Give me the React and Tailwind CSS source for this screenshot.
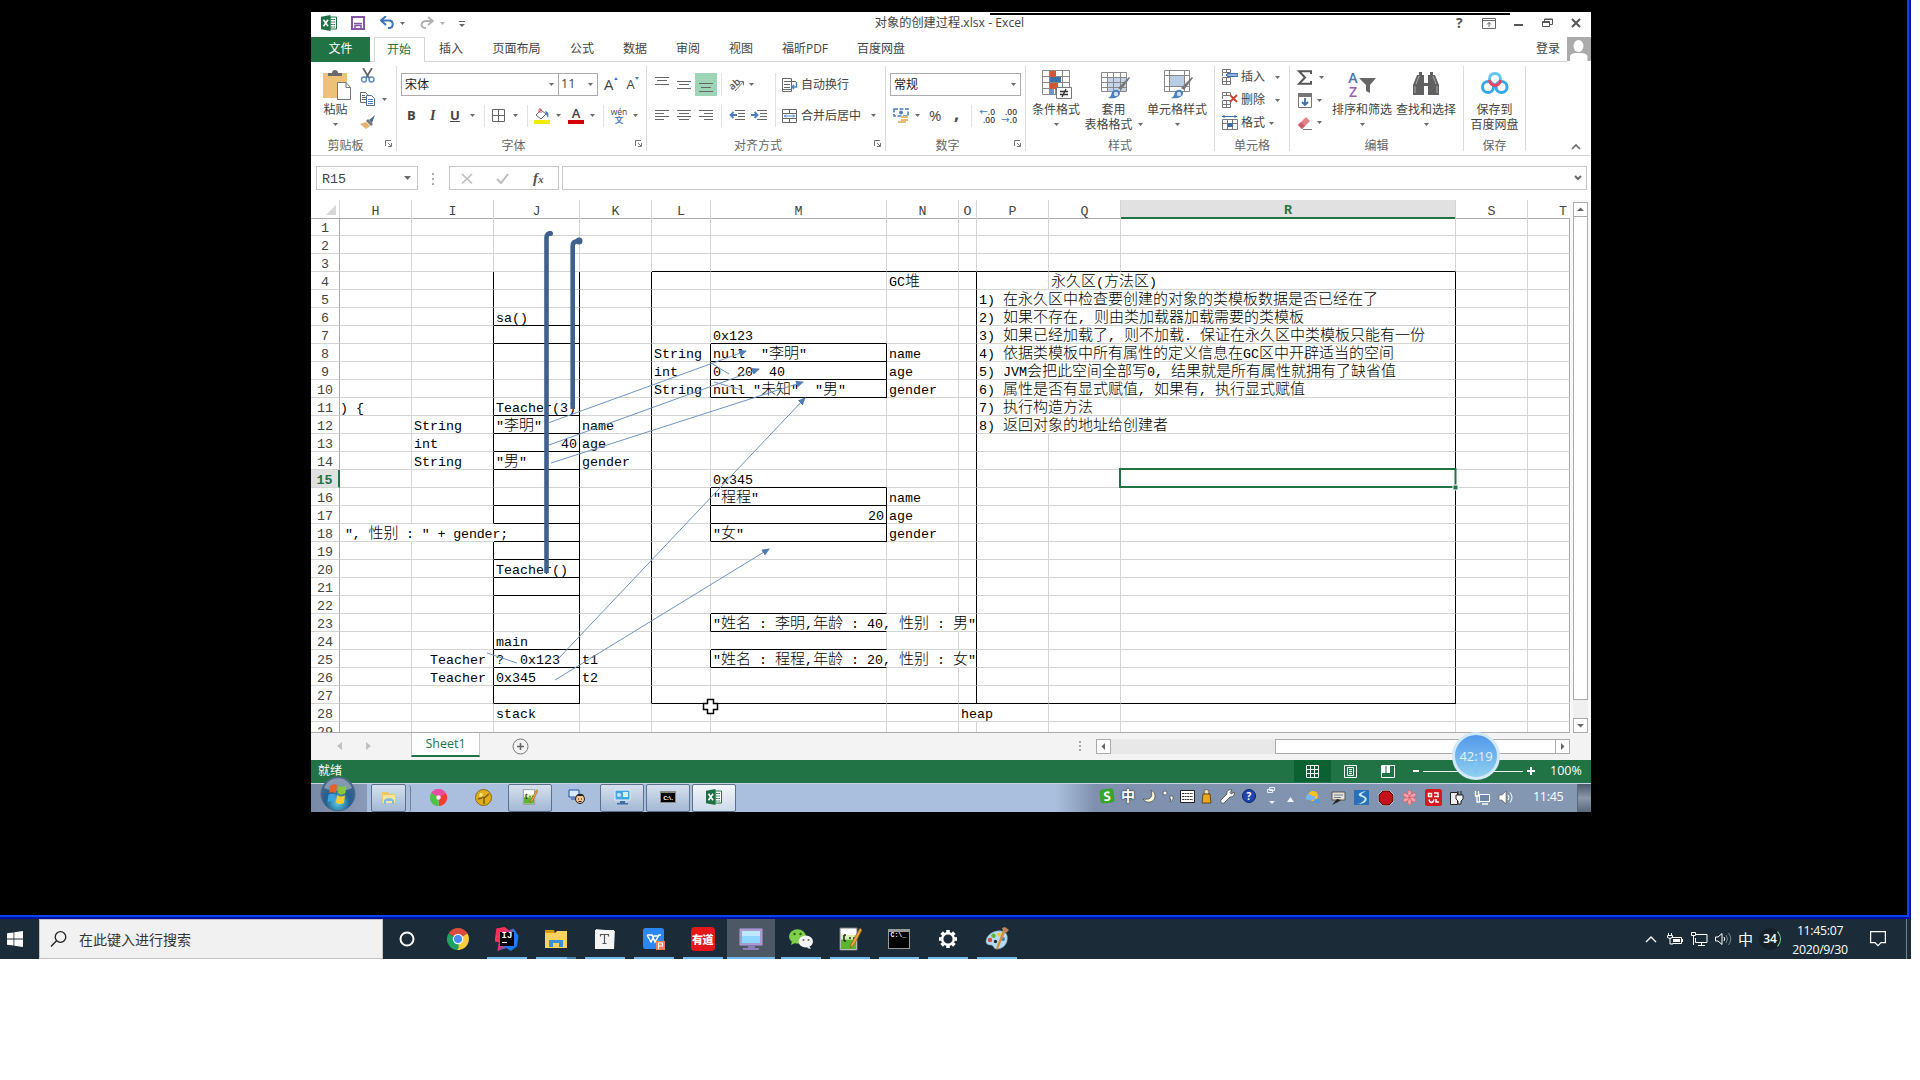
import React from "react";

const CJK = /([\u3000-\u9fff\uff00-\uffef]+)/;

// Sheet text: CJK glyphs are 15px wide, Latin ones 8px.
function T({ children }) {
  return (
    <span className="relative top-[1px] whitespace-pre">
      {children.split(CJK).map((s, i) =>
        i % 2 ? (
          <span key={i} className="text-[15px] font-light">{s}</span>
        ) : (
          <span key={i}>{s}</span>
        )
      )}
    </span>
  );
}

function Ico({ w, h, c = "", children, vb }) {
  return (
    <svg width={w} height={h} viewBox={vb || `0 0 ${w} ${h}`} className={"shrink-0 " + c} fill="none">
      {children}
    </svg>
  );
}
const Caret = ({ c = "", f = "#6b6b6b" }) => (
  <Ico w={5} h={3} c={c}><path d="M0 0h5L2.5 3z" fill={f} /></Ico>
);
const Sep = ({ c = "" }) => <div className={"h-[22px] w-px shrink-0 bg-[#e2e2e2] " + c} />;

function Group({ w, label, launcher, children }) {
  return (
    <div className={"flex h-[93px] shrink-0 flex-col " + w}>
      <div className="mt-[4px] flex h-[85px] flex-col border-r border-[#dcdcdc]">
        <div className="h-[71px]">{children}</div>
        <div className="flex h-[16px] items-center">
          <span className="flex-1 pt-[5px] text-center text-[#666]">{label}</span>
          {launcher && (
            <Ico w={7} h={7} c="mr-[4px] ml-[5px]">
              <path d="M.5 6V.5H6M3 3l3 3M6.5 3v3.5H3" stroke="#777" />
            </Ico>
          )}
        </div>
      </div>
    </div>
  );
}

const Excel = ({ c = "", s = 16 }) => (
  <Ico w={s} h={s} vb="0 0 16 16" c={c}>
    <path d="M9 2h6.5v12H9z" fill="#fff" stroke="#217346" />
    <path d="M10 4.5h4M10 7h4M10 9.500h4M10 12h4" stroke="#217346" strokeDasharray="1.700 .6" />
    <path d="M0 1.700 9.500 0v16L0 14.300z" fill="#1e7145" />
    <path d="m2.500 4.800 4.500 6.500M7 4.800l-4.500 6.500" stroke="#fff" strokeWidth="1.600" />
  </Ico>
);

function TitleBar() {
  return (
    <div className="flex h-[25px] items-center">
      <div className="flex w-[505px] items-center">
        <Excel c="ml-[10px] -mt-[3px]" />
        <Ico w={14} h={14} c="ml-[14px] -mt-[3px]">
          <path d="M1 1h12v12H1z" stroke="#8256a8" strokeWidth="2" />
          <path d="M3 7.500h8M4 13V9.500h6V13" stroke="#8256a8" strokeWidth="1.500" />
        </Ico>
        <Ico w={15} h={14} c="ml-[15px] -mt-[3px]">
          <path d="M6 0 1 4.500 6 9M1.500 4.500H9c5 0 5 7.500 0 7.500H8" stroke="#3d75b8" strokeWidth="2" />
        </Ico>
        <Caret c="ml-[5px] -mt-[3px]" />
        <Ico w={14} h={14} c="ml-[15px] -mt-[3px]">
          <path d="m8 1 5 4-5 4M13 5H6C0 5 0 12 6 12" stroke="#b0b0b0" strokeWidth="1.800" />
        </Ico>
        <Caret c="ml-[6px] -mt-[3px]" f="#b5b5b5" />
        <Ico w={6} h={6} c="ml-[14px] -mt-px"><path d="M0 .5h6" stroke="#666" /><path d="M0 3h6L3 6z" fill="#666" /></Ico>
      </div>
      <div className="-mt-[2px] w-[267px] text-center text-[12.200px] text-[#444]">对象的创建过程.xlsx - Excel</div>
      <div className="-mt-[3px] flex flex-1 items-center text-[#555]">
        <span className="ml-[373px] w-[9px] text-[14px] font-bold">?</span>
        <Ico w={14} h={11} c="ml-[17px]">
          <path d="M.5.5h13v10H.5zM.5 2.500h13M7 9V4.500M5 6.500l2-2 2 2" stroke="#666" />
        </Ico>
        <Ico w={9} h={3} c="mt-[5px] ml-[18px]"><path d="M0 1h9" stroke="#555" strokeWidth="2" /></Ico>
        <Ico w={11} h={10} c="ml-[19px]"><path d="M.5 3.500h7v5h-7zM.5 4.500h7M2.500 3V1h8v5.500H8M2.500 1.500h8" stroke="#555" /></Ico>
        <Ico w={10} h={10} c="ml-[18px]"><path d="m1 1 8 8M9 1 1 9" stroke="#555" strokeWidth="2" /></Ico>
      </div>
    </div>
  );
}

const TABS = [
  ["插入", "w-[52px]"], ["页面布局", "w-[79px]"], ["公式", "w-[52px]"], ["数据", "w-[54px]"],
  ["审阅", "w-[52px]"], ["视图", "w-[54px]"], ["福昕PDF", "w-[74px]"], ["百度网盘", "w-[78px]"],
];

function Tabs() {
  return (
    <div className="flex h-[25px] items-stretch text-[#444]">
      <div className="flex w-[59px] items-center justify-center bg-[#217346] pb-px text-white">文件</div>
      <div className="w-[4px] border-b border-[#d5d5d5]" />
      <div className="flex w-[51px] items-center justify-center border-x border-t border-[#d5d5d5] pr-px text-[#217346]">开始</div>
      {TABS.map(([t, w]) => (
        <div key={t} className={"flex items-center justify-center border-b border-[#d5d5d5] " + w}>{t}</div>
      ))}
      <div className="flex flex-1 items-center justify-end border-b border-[#d5d5d5] pr-[7px] pb-px">登录</div>
      <Ico w={24} h={24}>
        <path d="M0 0h24v24H0z" fill="#ababab" />
        <ellipse cx="11.500" cy="9" rx="5" ry="6" fill="#fff" />
        <path d="M3 24v-4c0-4 5-4 8.500-4s9 0 9 4v4z" fill="#fff" />
      </Ico>
    </div>
  );
}

const Lines = ({ w, c = "" }) => (
  <Ico w={14} h={13} c={c}>
    {w.map(([x, l, y]) => <path key={y} d={`M${x} ${y}.5h${l}`} stroke="#666" />)}
  </Ico>
);

const Brush = () => (
  <g>
    <path d="m29 8-9 12-3-2L28 7z" fill="#777" />
    <path d="M7 28c3-1 3-3 4-6 3-4 8-2 8 1 0 4-5 6-12 5z" fill="#4a80c0" />
    <circle cx="15" cy="24" r="2.200" fill="#cfe0f3" />
  </g>
);

function BigButton({ w, icon, lines, caret }) {
  return (
    <div className={"flex shrink-0 flex-col items-center pt-[4px] " + w}>
      <div className="flex h-[32px] items-start">{icon}</div>
      <div className="h-[15px] text-center leading-[16px] whitespace-nowrap">{lines[0]}</div>
      <div className="flex h-[15px] items-center gap-[5px] leading-[16px] whitespace-nowrap">
        {lines[1]}
        {caret && <Caret />}
      </div>
    </div>
  );
}

function Ribbon() {
  return (
    <div className="flex h-[94px] border-b border-[#cfcfcf] text-[#444]">
      <Group w="w-[86px]" label="剪贴板" launcher>
        <div className="flex">
          <BigButton w="w-[49px]" caret lines={["粘贴"]} icon={
            <Ico w={28} h={30} c="ml-[3px]">
              <path d="M0 3h24v25H0z" fill="#edc177" />
              <path d="M5 6V3h4c0-4 6-4 6 0h4v3z" fill="#6a6a6a" />
              <path d="M14.500 12.500H23l4.500 5v12h-13z" fill="#fff" stroke="#777" />
              <path d="M23 12.500v5h4.500" stroke="#777" />
            </Ico>} />
          <div className="flex flex-col">
            <Ico w={15} h={15} c="mt-[2px] mb-[9px]">
              <path d="m3 0 6 10M12 0 6 10" stroke="#666" strokeWidth="1.800" />
              <circle cx="4" cy="11.500" r="2.500" stroke="#5b8cc4" strokeWidth="1.400" />
              <circle cx="11.500" cy="11.500" r="2.500" stroke="#5b8cc4" strokeWidth="1.400" />
            </Ico>
            <div className="flex items-center">
              <Ico w={16} h={14}>
                <path d="M.5.5h5l2 2v8h-7zM2 3.500h3M2 5.500h4M2 7.500h4" stroke="#666" />
                <path d="M6.500 3.500h5l3 3v7h-8z" fill="#fff" stroke="#4f6f99" />
                <path d="M8 7.500h5M8 9.500h5M8 11.500h5" stroke="#4a80c0" />
              </Ico>
              <Caret c="ml-[6px]" />
            </div>
            <Ico w={16} h={14} c="mt-[9px]">
              <path d="m15 0-6 5 3 3z" fill="#4b6b91" /><path d="m8 4 5 5-2 2-5-5z" fill="#777" />
              <path d="M0 9l6-2 4 4-4 3z" fill="#e6b46c" />
            </Ico>
          </div>
        </div>
      </Group>

      <Group w="w-[250px]" label="字体" launcher>
        <div className="mt-[7px] ml-[4px] flex h-[23px] items-center">
          <div className="flex h-[23px] w-[158px] items-center justify-between border border-[#ababab] px-[3px] pr-[4px] text-[#222]">宋体<Caret /></div>
          <div className="-ml-px flex h-[23px] w-[40px] items-center justify-between border border-[#ababab] px-[2px] pr-[4px] text-[12.500px]">11<Caret /></div>
          <span className="ml-[6px] text-[15px]">A</span>
          <Ico w={4} h={3} c="mb-[12px]"><path d="M0 3 2 0l2 3z" fill="#4a80c0" /></Ico>
          <span className="ml-[9px] text-[13px]">A</span>
          <Ico w={4} h={3} c="mb-[12px]"><path d="M0 0h4L2 3z" fill="#4a80c0" /></Ico>
        </div>
        <div className="mt-[8px] ml-[10px] flex h-[23px] items-center text-[13px]">
          <b className="w-[9px]">B</b>
          <i className="ml-[14px] w-[6px] font-['Liberation_Serif',serif] text-[14px] font-bold">I</i>
          <b className="ml-[14px] w-[9px] underline">U</b>
          <Caret c="ml-[11px]" />
          <Sep c="ml-[9px]" />
          <Ico w={13} h={13} c="ml-[7px]"><path d="M.5.500h12v12H.5zM6.500.500v12M.5 6.500h12" stroke="#666" /></Ico>
          <Caret c="ml-[8px]" />
          <Sep c="ml-[9px]" />
          <Ico w={16} h={16} c="ml-[6px]">
            <path d="M0 12h16v4H0z" fill="#f4ec00" />
            <path d="m2 7 5-5 5 4-5 5z" fill="#fff" stroke="#666" /><path d="M5 5V1h2v4" stroke="#c55" />
            <path d="M11 3c4 1 4 4 3 7-1-2-2-3-3-7z" fill="#4a80c0" />
          </Ico>
          <Caret c="ml-[6px]" />
          <div className="ml-[7px] flex w-[16px] flex-col items-center border-b-[4px] border-[#d40000] text-[13px] leading-[13px] font-semibold">A</div>
          <Caret c="ml-[6px]" />
          <Sep c="ml-[8px]" />
          <div className="ml-[6px] flex w-[18px] flex-col items-center leading-[8px]">
            <span className="text-[8.500px]">wén</span>
            <span className="text-[8.500px] font-bold text-[#4a80c0]">文</span>
          </div>
          <Caret c="ml-[5px]" />
        </div>
      </Group>

      <Group w="w-[239px]" label="对齐方式" launcher>
        <div className="flex">
          <div className="flex w-[128px] flex-col pt-[7px]">
            <div className="flex h-[23px] items-center">
              <Lines c="ml-[8px] mb-[6px]" w={[[0, 14, 2], [2, 10, 5], [0, 14, 9]]} />
              <Lines c="ml-[8px]" w={[[0, 14, 3], [2, 10, 6], [0, 14, 10]]} />
              <div className="ml-[4px] flex h-[23px] w-[22px] items-end justify-center bg-[#9fd5b7] pb-px">
                <Lines w={[[0, 14, 1], [2, 10, 5], [0, 14, 9]]} />
              </div>
              <Sep c="ml-[4px]" />
              <Ico w={16} h={15} c="ml-[7px] overflow-visible">
                <text x="0" y="11" fontSize="10" fontWeight="600" fill="#555" transform="rotate(-40 5 8)" fontFamily="Open Sans">ab</text>
                <path d="m6 14 8-9M14.500 8.500V4.500h-4" stroke="#777" />
              </Ico>
              <Caret c="ml-[4px]" />
            </div>
            <div className="mt-[8px] flex h-[23px] items-center">
              <Lines c="ml-[8px]" w={[[0, 14, 1], [0, 9, 4], [0, 14, 7], [0, 9, 10]]} />
              <Lines c="ml-[8px]" w={[[0, 14, 1], [2, 10, 4], [0, 14, 7], [2, 10, 10]]} />
              <Lines c="ml-[8px]" w={[[0, 14, 1], [5, 9, 4], [0, 14, 7], [5, 9, 10]]} />
              <Sep c="ml-[8px]" />
              <Ico w={16} h={11} c="ml-[7px]">
                <path d="M6 .5h10M9 3.500h7M9 6.500h7M6 9.500h10" stroke="#666" /><path d="M8 5H2M4.500 2 1.500 5l3 3" stroke="#4a80c0" strokeWidth="1.800" />
              </Ico>
              <Ico w={16} h={11} c="ml-[6px]">
                <path d="M6 .5h10M9 3.500h7M9 6.500h7M6 9.500h10" stroke="#666" /><path d="M0 5h6M3.500 2l3 3-3 3" stroke="#4a80c0" strokeWidth="1.800" />
              </Ico>
            </div>
          </div>
          <div className="mt-[7px] h-[54px] w-px bg-[#e2e2e2]" />
          <div className="flex flex-col pt-[7px]">
            <div className="flex h-[23px] items-center">
              <Ico w={16} h={14} c="ml-[6px]">
                <path d="M.5.500h9v13h-9zM2 3.500h12M2 6.500h6M2 9.500h6M.5 11.500h9" stroke="#666" />
                <path d="M14.500 4v5H10M12 7l-2 2 2 2" stroke="#4a80c0" strokeWidth="1.400" />
              </Ico>
              <span className="ml-[3px]">自动换行</span>
            </div>
            <div className="mt-[8px] flex h-[23px] items-center">
              <Ico w={16} h={14} c="ml-[6px]">
                <path d="M.5.500h14v13H.5zM.5 4.500h14M.5 9.500h14M7.500.500v4M7.500 9.500v4" stroke="#666" />
                <path d="M2 7h11M4 5.500 2.500 7 4 8.500M11 5.500 12.500 7 11 8.500" stroke="#4a80c0" />
              </Ico>
              <span className="ml-[3px]">合并后居中</span>
              <Caret c="ml-[10px]" />
            </div>
          </div>
        </div>
      </Group>

      <Group w="w-[140px]" label="数字" launcher>
        <div className="mt-[7px] ml-[4px] flex h-[23px] w-[131px] items-center justify-between border border-[#ababab] px-[3px] pr-[4px] text-[#222]">常规<Caret /></div>
        <div className="mt-[8px] ml-[7px] flex h-[23px] items-center">
          <Ico w={16} h={16}>
            <path d="M1 1h14v7H1z" stroke="#4a80c0" strokeWidth="1.600" strokeDasharray="4 1.500" /><circle cx="8" cy="4.500" r="2" fill="#4a80c0" />
            <path d="M8 8h7v2H8zM8 11h7v2H8zM5 13h8v2H5z" fill="#e8bb74" />
          </Ico>
          <Caret c="ml-[6px]" />
          <span className="ml-[9px] w-[14px] text-[15px]">%</span>
          <span className="-mt-[5px] ml-[11px] w-[6px] text-[18px] font-bold">,</span>
          <Sep c="ml-[11px]" />
          <div className="ml-[6px] flex w-[17px] flex-col text-right text-[8.500px] leading-[8px] font-semibold"><span><span className="text-[#4a80c0]">←</span>.0</span><span>.00</span></div>
          <div className="ml-[5px] flex w-[17px] flex-col text-right text-[8.500px] leading-[8px] font-semibold"><span>.00</span><span><span className="text-[#4a80c0]">→</span>.0</span></div>
        </div>
      </Group>

      <Group w="w-[189px]" label="样式">
        <div className="flex">
          <BigButton w="w-[60px]" caret lines={["条件格式"]} icon={
            <Ico w={30} h={30} c="ml-px">
              <path d="M.5.500h27v24H.5zM.5 6.500h27M.5 12.500h27M.5 18.500h27M7.500.500v24M13.500.500v24M20.500.500v24" stroke="#888" />
              <path d="M8 1h6v6H8zM8 13h8v6H8z" fill="#d9532c" /><path d="M8 7h11v5H8z" fill="#3e6fb0" /><path d="M8 19h4v6H8z" fill="#6f93c4" />
              <path d="M14.500 17.500h15v11h-15z" fill="#fff" stroke="#777" />
              <path d="M18 21.500h8M18 24.500h8M24 19l-4 8" stroke="#333" strokeWidth="1.300" />
            </Ico>} />
          <BigButton w="w-[57px] -ml-[1px]" caret lines={["套用", "表格格式"]} icon={
            <Ico w={30} h={30} c="ml-[4px]">
              <path d="M7 7h18v14H7z" fill="#c5d5e9" />
              <path d="M.5 2.500h25v19H.5zM.5 7.500h25M.5 12.500h25M.5 17.500h25M6.500 2.500v19M12.500 2.500v19M19.500 2.500v19" stroke="#888" />
              <Brush />
            </Ico>} />
          <BigButton w="w-[72px] -ml-[1px]" caret lines={["单元格样式"]} icon={
            <Ico w={30} h={30} c="ml-[3px]">
              <path d="M6 6h14v10H6z" fill="#b8cce4" />
              <path d="M.5.500h25v21H.5zM.5 5.500h25M.5 16.500h25M5.500.500v21M20.500.500v21" stroke="#888" />
              <Brush />
            </Ico>} />
        </div>
      </Group>

      <Group w="w-[75px]" label="单元格">
        <div className="ml-[7px] flex flex-col">
          {[["插入", 0, "ml-[10px]"], ["删除", 1, "ml-[10px]"], ["格式", 2, "ml-[4px]"]].map(([t, k, m]) => (
            <div key={t} className="-mt-px flex h-[24px] items-center">
              <Ico w={16} h={16}>
                {k < 2 && <path d="M.5.500h8v3h-8zM4.500.500v3M.5 12.500h8v3h-8zM4.500 8.500v7M.5 8.500h8v4h-8zM.5 4v3" stroke="#777" />}
                {k === 0 && <path d="M6 4.500h10v3H6zM7 3 4 6l3 3" fill="#8fb3de" stroke="#3d6ea8" />}
                {k === 1 && <path d="m8 3 7 7M15 3l-7 7" stroke="#d0432f" strokeWidth="1.800" />}
                {k === 2 && <path d="M.5 4.500h15v10H.5zM.5 8.500h15M5.500 4.500v10M10.500 4.500v10" stroke="#777" />}
                {k === 2 && <path d="M0 1.500h15M2 0v3M13 0v3" stroke="#3d6ea8" />}
                {k === 2 && <path d="M6 8h5v4H6z" fill="#3d6ea8" />}
              </Ico>
              <span className="ml-[3px]">{t}</span>
              <Caret c={m} />
            </div>
          ))}
        </div>
      </Group>

      <Group w="w-[174px]" label="编辑">
        <div className="flex">
          <div className="flex w-[36px] flex-col pl-[7px]">
            <div className="flex h-[23px] items-center">
              <Ico w={16} h={15}><path d="M14 4V1.200H2L8 7.500 2 13.800h12V11" stroke="#555" strokeWidth="2" /></Ico><Caret c="ml-[6px]" />
            </div>
            <div className="flex h-[22px] items-center">
              <Ico w={14} h={15} c="ml-px"><path d="M.5.500h13v14H.5z" stroke="#777" /><path d="M0 0h14v4H0z" fill="#777" /><path d="M7 5v7M4 9l3 3 3-3" stroke="#3d6ea8" strokeWidth="1.800" /></Ico><Caret c="ml-[5px]" />
            </div>
            <div className="flex h-[23px] items-center">
              <Ico w={14} h={14} c="ml-px"><path d="m0 9 8-8 4 4-8 8z" fill="#e58088" /><path d="m0 9 3-3 4 4-3 3z" fill="#c9606b" /><path d="M5 13.500h9" stroke="#777" /></Ico><Caret c="ml-[5px]" />
            </div>
          </div>
          <BigButton w="w-[72px]" caret lines={["排序和筛选"]} icon={
            <div className="flex pt-px">
              <div className="flex flex-col items-center text-[14px] leading-[14px] font-semibold"><span className="text-[#4a72b0]">A</span><span className="text-[#9b5fb5]">Z</span></div>
              <Ico w={17} h={16} c="mt-[6px] ml-px"><path d="M0 1h17l-6 7v8l-4-2V8z" fill="#666" /></Ico>
            </div>} />
          <BigButton w="w-[62px] -ml-[3px]" caret lines={["查找和选择"]} icon={
            <Ico w={26} h={24} c="mt-[2px]">
              <path d="M0 13 4 3h2V0h3v3h2v8h4V3h2V0h3v3h2l4 10v10H15v-9h-4v9H0z" fill="#606060" />
              <path d="M2 14v7M24 14v7M6 4l-3 8M20 4l3 8" stroke="#aaa" />
            </Ico>} />
        </div>
      </Group>

      <Group w="w-[62px]" label="保存">
        <BigButton w="w-[61px]" lines={["保存到", "百度网盘"]} icon={
          <Ico w={28} h={24} c="mt-[2px]">
            <circle cx="7" cy="15" r="5.500" stroke="#35a8e8" strokeWidth="3" />
            <circle cx="20.500" cy="15" r="5.500" stroke="#35a8e8" strokeWidth="3" />
            <circle cx="14" cy="7" r="5.500" stroke="#5bc5f0" strokeWidth="3" />
            <path d="M8.500 8c1 7 10 7 11 0" stroke="#e64560" strokeWidth="3" />
          </Ico>} />
      </Group>
      <div className="flex flex-1 items-end justify-end pr-[10px] pb-[5px]">
        <Ico w={10} h={6}><path d="m1 5 4-4 4 4" stroke="#666" strokeWidth="1.600" /></Ico>
      </div>
    </div>
  );
}

function FormulaBar() {
  return (
    <div className="flex h-[44px] pt-[10px] pl-[5px]">
      <div className="flex h-[24px] w-[102px] items-center justify-between border border-[#c6c6c6] pr-[6px] pl-[5px] font-['Liberation_Mono',monospace] text-[13.330px] text-[#444]">
        <span className="pt-[3px]">R15</span><Ico w={7} h={4}><path d="M0 0h7L3.500 4z" fill="#6b6b6b" /></Ico>
      </div>
      <div className="mt-[7px] ml-[14px] flex w-[2px] flex-col gap-[3px]">
        <div className="h-[2px] bg-[#aaa]" /><div className="h-[2px] bg-[#aaa]" /><div className="h-[2px] bg-[#aaa]" />
      </div>
      <div className="ml-[15px] flex h-[24px] w-[110px] items-center border border-[#c6c6c6]">
        <Ico w={12} h={11} c="ml-[11px]"><path d="m1 1 10 9.500M11 1 1 10.500" stroke="#bdbdbd" strokeWidth="1.600" /></Ico>
        <Ico w={13} h={11} c="ml-[23px]"><path d="m1 6 4 4 7-9" stroke="#bdbdbd" strokeWidth="2" /></Ico>
        <i className="ml-[24px] font-['Liberation_Serif',serif] text-[15px] font-bold text-[#555]">f<span className="text-[11px]">x</span></i>
      </div>
      <div className="ml-[3px] flex h-[24px] w-[1025px] items-center justify-end border border-[#c6c6c6] pr-[4px]">
        <Ico w={8} h={6}><path d="m1 1 3 3 3-3" stroke="#666" strokeWidth="2" /></Ico>
      </div>
    </div>
  );
}

const COLS = "HIJKLMNOPQRST".split("");
const GRID = "grid grid-cols-[29px_72px_82px_86px_72px_59px_176px_72px_18px_72px_72px_335px_72px_42px]";

const TEXT = {
  H11: ") {", H18: '", 性别 : " + gender;',
  I12: "String", I13: "int", I14: "String", I25: "Teacher", I26: "Teacher",
  J6: "sa()", J11: "Teacher(3)", J12: '"李明"', J13: "40", J14: '"男"', J20: "Teacher()", J24: "main",
  J25: "?  0x123", J26: "0x345", J28: "stack",
  K12: "name", K13: "age", K14: "gender", K25: "t1", K26: "t2",
  L8: "String", L9: "int", L10: "String",
  M7: "0x123", M8: 'null  "李明"', M9: "0  20  40", M10: 'null "未知"  "男"',
  M15: "0x345", M16: '"程程"', M17: "20", M18: '"女"',
  M23: '"姓名 : 李明,年龄 : 40, 性别 : 男"', M25: '"姓名 : 程程,年龄 : 20, 性别 : 女"',
  N4: "GC堆", N8: "name", N9: "age", N10: "gender", N16: "name", N17: "age", N18: "gender",
  O28: "heap", Q4: "永久区(方法区)",
  P5: "1) 在永久区中检查要创建的对象的类模板数据是否已经在了",
  P6: "2) 如果不存在, 则由类加载器加载需要的类模板",
  P7: "3) 如果已经加载了, 则不加载. 保证在永久区中类模板只能有一份",
  P8: "4) 依据类模板中所有属性的定义信息在GC区中开辟适当的空间",
  P9: "5) JVM会把此空间全部写0, 结果就是所有属性就拥有了缺省值",
  P10: "6) 属性是否有显式赋值, 如果有, 执行显式赋值",
  P11: "7) 执行构造方法",
  P12: "8) 返回对象的地址给创建者",
};
const PAD = {
  H11: "pl-0 ", H18: "pl-[5px] tracking-[-0.15px] ",
  I25: "justify-end pr-[7px] ", I26: "justify-end pr-[7px] ", J13: "justify-end pr-[2px] ", M17: "justify-end pr-[2px] ",
};
const J_BOTTOM = [6, 7, 11, 12, 13, 14, 16, 17, 18, 19, 20, 21, 24, 25, 26, 27];
const M_BOTTOM = [7, 8, 9, 10, 15, 16, 17, 18, 22, 23, 24, 25];
const M_LEFT = [8, 9, 10, 16, 17, 18, 23, 25];
const NO_RIGHT = [
  "H18", "I18", "M23", "N23", "M25", "N25", "O28", "Q4",
  "P5", "Q5", "P6", "Q6", "P7", "Q7", "P8", "Q8", "P9", "Q9", "P10", "Q10", "P11", "P12", "Q12",
];

function lineRight(c, r) {
  if (NO_RIGHT.includes(c + r)) return "border-r-transparent";
  const inBox = r >= 4 && r <= 27;
  if (inBox && "IJKOR".includes(c)) return "border-r-black";
  if (c === "L" && M_LEFT.includes(r)) return "border-r-black";
  if (c === "M" && M_LEFT.includes(r)) return "border-r-black";
  if (c === "T") return "border-r-[#ababab]";
  return "border-r-[#d4d4d4]";
}
function lineBottom(c, r) {
  if ((r === 3 || r === 27) && "LMNOPQR".includes(c)) return "border-b-black";
  if (c === "J" && J_BOTTOM.includes(r)) return "border-b-black";
  if (c === "M" && M_BOTTOM.includes(r)) return "border-b-black";
  return "border-b-[#d4d4d4]";
}

function Arrow({ x1, y1, x2, y2 }) {
  return <path d={`M${x1} ${y1}L${x2} ${y2}`} stroke="#6f93c2" markerEnd="url(#head)" />;
}

function Sheet() {
  return (
    <div className="relative h-[533px] w-[1259px] overflow-hidden border-b border-[#ababab] font-['Liberation_Mono','Noto_Sans_CJK_SC',monospace] text-[13.330px]">
      <div className={GRID + " h-[18px] text-[#444]"}>
        <div className="flex items-end justify-end border-r border-b border-r-[#d4d4d4] border-b-[#ababab] pr-[3px] pb-[3px]">
          <Ico w={10} h={10}><path d="M10 0v10H0z" fill="#d8d8d8" /></Ico>
        </div>
        {COLS.map((c) => (
          <div key={c} className={"flex items-center border-r border-r-[#d4d4d4] pt-[4px] " + (c === "T" ? "justify-end border-r-transparent pr-[2px] " : "justify-center ") + (c === "R" ? "border-b-2 border-b-[#217346] bg-[#e1e1e1] font-bold text-[#217346]" : "border-b border-b-[#ababab]")}>{c}</div>
        ))}
      </div>
      {Array.from({ length: 29 }, (_, i) => i + 1).map((r) => (
        <div key={r} className={GRID + " h-[18px]"}>
          <div className={"flex items-end justify-center border-b border-b-[#d4d4d4] leading-[13px] " + (r === 15 ? "border-r-2 border-r-[#217346] bg-[#e1e1e1] font-bold text-[#217346]" : "border-r border-r-[#ababab] text-[#444]")}>{r}</div>
          {COLS.map((c) => (
            <div key={c} className={"flex min-w-0 items-end border-r border-b leading-[15px] text-black " + (PAD[c + r] || "px-[2px] ") + lineRight(c, r) + " " + lineBottom(c, r)}>
              {TEXT[c + r] && <T>{TEXT[c + r]}</T>}
            </div>
          ))}
        </div>
      ))}
      <svg className="absolute top-0 left-0" width="1259" height="533" viewBox="311 200 1259 533" fill="none">
        <defs>
          <marker id="head" markerWidth="9" markerHeight="8" refX="7" refY="3.500" orient="auto" markerUnits="userSpaceOnUse">
            <path d="M0 0 8 3.500 0 7z" fill="#4f7db8" />
          </marker>
        </defs>
        <path d="M546.500 573V238q0-5 5-5" stroke="#3f618f" strokeWidth="4.600" />
        <circle cx="550.500" cy="233.500" r="2.500" fill="#3f618f" />
        <path d="M572.700 409V246q0-5 6-5" stroke="#3f618f" strokeWidth="4.600" />
        <circle cx="579" cy="241" r="3.500" fill="#3f618f" />
        <Arrow x1={548} y1={423} x2={746} y2={351} />
        <Arrow x1={549} y1={445} x2={759} y2={369} />
        <Arrow x1={551} y1={463} x2={803} y2={382} />
        <Arrow x1={558} y1={659} x2={805} y2={398} />
        <Arrow x1={555} y1={680} x2={769} y2={549} />
        <path d="m711 363 18 11M714 382l28 8M487 653l30 10" stroke="#6f93c2" />
        <path d="M1120 469h335.500v18H1120z" stroke="#217346" strokeWidth="2" />
        <path d="M1453 485h5v5h-5z" fill="#217346" stroke="#fff" />
        <path d="M707.500 699.500h6v4h4v6h-4v4h-6v-4h-4v-6h4z" fill="#fff" stroke="#000" strokeWidth="1.500" />
      </svg>
    </div>
  );
}

const ScrollBtn = ({ d, c = "" }) => (
  <div className={"flex h-[15px] w-[15px] shrink-0 items-center justify-center border border-[#ababab] bg-white " + c}>
    <Ico w={7} h={7}><path d={d} fill="#666" /></Ico>
  </div>
);

function SheetTabs() {
  return (
    <div className="flex h-[27px] bg-[#f3f3f3]">
      <div className="flex w-[100px] items-center pb-[2px]">
        <Ico w={5} h={8} c="ml-[26px]"><path d="M5 0v8L0 4z" fill="#c0c0c0" /></Ico>
        <Ico w={5} h={8} c="ml-[24px]"><path d="M0 0v8l5-4z" fill="#c0c0c0" /></Ico>
      </div>
      <div className="flex h-[24px] w-[69px] items-center justify-center border-r border-b-2 border-l border-x-[#c8c8c8] border-b-[#217346] bg-white pt-px text-[12.500px] text-[#217346]">Sheet1</div>
      <Ico w={17} h={17} c="mt-[5px] ml-[32px]">
        <circle cx="8.500" cy="8.500" r="7.500" stroke="#777" /><path d="M8.500 5v7M5 8.500h7" stroke="#666" strokeWidth="1.600" />
      </Ico>
      <div className="mt-[8px] ml-[550px] flex w-[2px] flex-col gap-[2px]">
        <div className="h-[2px] bg-[#aaa]" /><div className="h-[2px] bg-[#aaa]" /><div className="h-[2px] bg-[#aaa]" />
      </div>
      <div className="mt-[6px] ml-[15px] flex">
        <ScrollBtn d="M5 0v7L1.500 3.500z" />
        <div className="h-[15px] w-[164px] bg-[#e8e8e8]" />
        <div className="h-[15px] w-[280px] border border-r-0 border-[#ababab] bg-white" />
        <ScrollBtn d="M2 0v7l3.500-3.500z" />
      </div>
    </div>
  );
}

function StatusBar() {
  return (
    <div className="flex h-[23px] items-center bg-[#217346] pb-px text-white">
      <span className="ml-[7px] flex-1">就绪</span>
      <div className="flex h-[22px] w-[37px] items-center justify-center bg-[#0c6132]">
        <Ico w={13} h={13}><path d="M.5.500h12v12H.5zM.5 4.500h12M.5 8.500h12M4.500.500v12M8.500.500v12" stroke="#fff" /></Ico>
      </div>
      <Ico w={13} h={13} c="ml-[13px]"><path d="M.5.500h12v12H.5zM3.500 2.500h6v8h-6zM5 4.500h3M5 6.500h3M5 8.500h3" stroke="#fff" /></Ico>
      <Ico w={14} h={13} c="ml-[24px]"><path d="M.5.500h13v12H.5z" stroke="#fff" /><path d="M1 1h3.500v7H1zM5.500 1H9v7H5.500z" fill="#fff" /></Ico>
      <div className="ml-[18px] h-[2px] w-[6px] bg-white" />
      <div className="ml-[4px] h-px w-[100px] bg-white/90" />
      <Ico w={8} h={8} c="ml-[4px]"><path d="M4 0v8M0 4h8" stroke="#fff" strokeWidth="2" /></Ico>
      <span className="ml-[15px] w-[41px] text-[12.500px]">100%</span>
    </div>
  );
}

const TaskBtn = ({ c = "", children }) => (
  <div className={"flex h-[28px] shrink-0 items-center justify-center rounded-[2px] border border-[#5d6f8b] bg-linear-to-b from-[#d6e0ee] to-[#a3b8d4] pb-[2px] " + c}>{children}</div>
);

const Note = ({ w = 16 }) => (
  <Ico w={w} h={w} vb="0 0 24 24">
    <path d="M2 1h17v22H2z" fill="#fff" stroke="#777" />
    <path d="M3 12h15v10H3z" fill="#5cb531" /><path d="M3 8h15v5H3z" fill="#c9e88f" opacity=".7" />
    <path d="M6 8v6M6 8h2M6 14h2M11 11h2M15 11h2" stroke="#222" strokeWidth="1.500" />
    <path d="M22 1 13 17l-1 4 4-3L24 3z" fill="#e8a33a" stroke="#8a5a17" strokeWidth=".7" />
  </Ico>
);

function Win7Bar() {
  return (
    <div className="flex h-[29px] items-center border-t border-[#c8d5e6] bg-[#a9bfdd]">
      <div className="flex h-full w-[56px] items-center bg-linear-to-r from-[#7889a5] to-[#8a9bb9]">
        <Ico w={36} h={36} c="relative -top-[4px] ml-[9px]">
          <defs>
            <radialGradient id="orb" cx=".5" cy=".75" r=".7"><stop stopColor="#5fd0ee" /><stop offset=".5" stopColor="#21618f" /><stop offset="1" stopColor="#4c6486" /></radialGradient>
          </defs>
          <circle cx="18" cy="18" r="17" fill="url(#orb)" stroke="#54698a" />
          <path d="M4 12C9-1 27-1 32 12c-8 4-20 4-28 0z" fill="#fff" opacity=".35" />
          <path d="M10 10c3-2 5-2 7-1l-1 8c-3-1-5-1-7 0z" fill="#e8602c" />
          <path d="M18.500 10c3 1 5 1 8-1l-1 8c-3 2-5 2-8 0z" fill="#8cc63f" />
          <path d="M8.500 18.500c3-1 5-1 7 0l-1 8c-3-2-5-2-7 0z" fill="#3ba3e0" />
          <path d="M17 19c3 2 5 2 8 0l-1 8c-3 2-5 1-8-.5z" fill="#fbcb2e" />
        </Ico>
      </div>
      <TaskBtn c="ml-[4px] w-[35px]">
        <Ico w={16} h={15}><path d="M1 2h6l1 2h6v9H1z" fill="#eec95f" /><path d="M2 5h12v8H2z" fill="#f8e49a" /><path d="M3 10q5-4 10 0v4h-2v-3H5v3H3z" fill="#7dbbe6" /></Ico>
      </TaskBtn>
      <div className="ml-[2px] h-[27px] w-[3px] rounded-r border-r border-[#6f819c]" />
      <Ico w={17} h={17} c="-mt-[2px] ml-[19px]">
        <path d="M8.500 8.500 1.200 4A8.500 8.500 0 0 1 15.800 4z" fill="#e84ba0" /><path d="M8.500 8.500 15.800 4a8.500 8.500 0 0 1-7 13z" fill="#f33b2f" />
        <path d="M8.500 8.500v8.500A8.500 8.500 0 0 1 1.200 4z" fill="#49c544" /><circle cx="8.500" cy="8.500" r="2.200" fill="#f3e9ee" />
      </Ico>
      <Ico w={17} h={17} c="-mt-[2px] ml-[28px]">
        <circle cx="8.500" cy="8.500" r="8" fill="#e0ae1c" stroke="#8a6913" /><path d="m4 5 5 4 5-4M9 9v6M3 10l4-1" stroke="#7d5c0f" strokeWidth="1.500" /><circle cx="6" cy="6" r="2" fill="#f8df7f" />
      </Ico>
      <TaskBtn c="ml-[16px] w-[44px]"><Note /></TaskBtn>
      <Ico w={17} h={16} c="-mt-[2px] ml-[16px]">
        <path d="M1 1h10v7H1z" fill="#d6e8ff" stroke="#1f4aa0" /><path d="M3 10h7" stroke="#1f4aa0" />
        <circle cx="12" cy="10" r="4.500" fill="#f0c18c" stroke="#222" /><path d="M8 7c2-3 7-3 8 0z" fill="#222" /><path d="M10 10h1M13 10h1M10.500 12.500h3" stroke="#222" />
      </Ico>
      <TaskBtn c="ml-[15px] w-[44px]">
        <Ico w={17} h={16}><path d="M1 1h15v10H1z" fill="#49a4e2" stroke="#e6f1fb" /><path d="M9 3h5v5H9z" fill="#d9efff" /><circle cx="5" cy="6" r="2" fill="#bfe6ff" /><path d="M6 12h5v2h3v1.500H3V14h3z" fill="#3d6ea8" /></Ico>
      </TaskBtn>
      <TaskBtn c="ml-[2px] w-[44px]">
        <div className="flex h-[12px] w-[16px] items-center justify-center border border-t-2 border-[#888] bg-black text-[6px] font-bold text-white">C:\.</div>
      </TaskBtn>
      <TaskBtn c="ml-[2px] w-[44px] from-[#f2f6fa] to-[#ccd9e9]"><Excel /></TaskBtn>
      <div className="h-full w-[320px]" />
      <div className="h-full w-[40px] bg-linear-to-r from-[#a9bfdd] to-[#7e90ad]" />
      <div className="flex h-full flex-1 items-center bg-linear-to-r from-[#7e90ad] to-[#8498b2] pb-[4px]">
        <div className="ml-[4px] flex h-[14px] w-[14px] shrink-0 -rotate-6 items-center justify-center rounded-[3px] bg-[#36a52c] text-[13px] leading-none font-bold text-white">S</div>
        <span className="ml-[7px] w-[14px] shrink-0 text-[14px] font-bold text-white [text-shadow:0_0_2px_#000]">中</span>
        <Ico w={14} h={13} c="ml-[7px]"><path d="M9 0c3 9-3 10-8 9 3 5 12 4 12-3 0-3-2-5-4-6z" fill="#fff7dc" stroke="#333" strokeWidth=".6" /></Ico>
        <Ico w={12} h={12} c="ml-[6px]"><circle cx="3" cy="3" r="2" fill="#fff" stroke="#333" strokeWidth=".6" /><path d="M8 6h3v3l-2 3H8l1-3H8z" fill="#fff" stroke="#333" strokeWidth=".6" /></Ico>
        <Ico w={15} h={13} c="ml-[6px]"><path d="M.5.500h14v12H.5z" fill="#fff" stroke="#222" /><path d="M2 3.500h11M2 6.500h11M2 9.500h11" stroke="#333" strokeDasharray="2 .6" /></Ico>
        <Ico w={11} h={15} c="ml-[6px]"><circle cx="5.500" cy="3" r="2.500" fill="#f1dfad" stroke="#333" strokeWidth=".6" /><path d="M2 5h7l1 9H1z" fill="#e8a91f" stroke="#4b3606" strokeWidth=".8" /></Ico>
        <Ico w={15} h={15} c="ml-[8px]"><path d="m1 11 6-6c-1-3 2-5 5-4L10 3.500l1.500 1.500L14 3c1 3-1 5-4 5l-6 6c-2 1-4-1-3-3z" fill="#fff" stroke="#333" strokeWidth=".7" /></Ico>
        <div className="ml-[7px] flex h-[14px] w-[14px] shrink-0 items-center justify-center rounded-full border border-[#10206a] bg-[#2144ad] text-[10px] font-bold text-white">?</div>
        <Ico w={9} h={20} c="-mt-[3px] ml-[11px]"><path d="M2.500 2.500h5v3h-5zM.5 4.500h5v3h-5z" stroke="#e9eef5" /><path d="M2 16h6l-3 3z" fill="#e9eef5" /></Ico>
        <Ico w={7} h={5} c="mt-[6px] ml-[11px]"><path d="M0 5h7L3.500 0z" fill="#f0f4f8" /></Ico>
        <Ico w={16} h={16} c="mt-[3px] ml-[11px]"><circle cx="8" cy="6" r="5" fill="#f9c21b" /><path d="M1 7c0-3 5-4 6-1 4-1 4 4 1 4H3C1 10 0 8 1 7z" fill="#79b6ef" /><path d="M9 11c0-3 6-3 6 0s-5 4-6 0z" fill="#4f9be0" /></Ico>
        <Ico w={16} h={16} c="mt-[4px] ml-[9px]"><path d="M2 2h13v8H2z" fill="#e7e2d5" stroke="#555" /><path d="M4 5h9M4 7.500h7" stroke="#6f7f93" /><path d="m2 15 5-6 4 1-3 2z" fill="#222" /></Ico>
        <Ico w={16} h={16} c="mt-[3px] ml-[8px]"><path d="M0 0h15v15H0z" fill="#2870b8" /><path d="M12 1C2 3 4 6 8 7s4 4-4 7c9 0 11-6 6-8S8 4 12 1z" fill="#c8ebff" /></Ico>
        <Ico w={16} h={16} c="mt-[3px] ml-[8px]"><path d="M5 .5h6L15.500 5v6L11 15.500H5L.5 11V5z" fill="#c4121a" stroke="#fff" /><path d="M5 1h6l4 4v6l-4 4H5l-4-4V5z" stroke="#3d0a0a" /></Ico>
        <Ico w={15} h={15} c="mt-[3px] ml-[8px]">
          {[0, 60, 120, 180, 240, 300].map((a) => <ellipse key={a} cx="7.500" cy="3.500" rx="2" ry="3.500" fill="#f3a0a9" stroke="#c8525f" strokeWidth=".6" transform={`rotate(${a} 7.500 7.500)`} />)}
        </Ico>
        <Ico w={17} h={17} c="mt-[3px] ml-[8px]">
          <rect width="17" height="17" rx="2.500" fill="#d51920" />
          <path d="M3.500 4.500h3v3h-3zM9 4h4v2.500M9 7.500h5M4 10.500c1 4 4 4 5 0M11 10v3h3" stroke="#fff" strokeWidth="1.500" />
        </Ico>
        <Ico w={14} h={15} c="mt-[3px] ml-[8px]"><path d="M.5 2.500h7v12h-7z" fill="#eee" stroke="#222" /><path d="M6 5h7v4l-2 2v3H8v-3L6 9zM8 5V1M11 5V1" fill="#fff" stroke="#222" /></Ico>
        <Ico w={16} h={15} c="mt-[3px] ml-[10px]"><path d="M5.500 4.500h10v7h-10z" fill="#6d86a8" stroke="#fff" /><path d="M8 14h6M1.500 1v5h3V1M3 6v6h3" stroke="#fff" strokeWidth="1.300" /></Ico>
        <Ico w={15} h={15} c="mt-[3px] ml-[8px]"><path d="M1 5h3l4-4v13l-4-4H1z" fill="#fff" stroke="#555" strokeWidth=".6" /><path d="M10 5q2 2.500 0 5M12 2.500q4 5 0 10" stroke="#fff" /></Ico>
        <span className="mt-[3px] ml-[20px] flex-1 text-[12.500px] tracking-[-0.3px] text-white">11:45</span>
        <div className="-mb-[4px] h-[28px] w-[14px] shrink-0 border-l border-[#5c6a7f] bg-linear-to-b from-[#4d5a6e] via-[#8a98aa] to-[#5d6a7e]" />
      </div>
    </div>
  );
}

const SLOTS = [
  ["circle", 0], ["chrome", 0], ["ij", 1], ["folder", 2], ["t", 1], ["wps", 1], ["youdao", 1],
  ["monitor", 3], ["wechat", 1], ["note", 1], ["cmd", 1], ["gear", 1], ["paint", 1],
];

function SlotIcon({ k }) {
  switch (k) {
    case "circle": return <Ico w={16} h={16} c="-ml-[3px]"><circle cx="8" cy="8" r="6.500" stroke="#fff" strokeWidth="2" /></Ico>;
    case "chrome": return (
      <Ico w={22} h={22}>
        <path d="M11 11 1.500 5.500a11 11 0 0 1 19 0z" fill="#dd4b3e" />
        <path d="M11 11l9.500-5.500A11 11 0 0 1 11 22l-1-1z" fill="#fccd3a" />
        <path d="m11 11 1 11A11 11 0 0 1 1.500 5.500z" fill="#1fa261" />
        <path d="M11 6h9.700l-1-2H8z" fill="#dd4b3e" /><path d="m15.300 13.500-5 8.500h2z" fill="#fccd3a" />
        <circle cx="11" cy="11" r="5.200" fill="#fff" /><circle cx="11" cy="11" r="4" fill="#4a8af4" />
      </Ico>);
    case "ij": return (
      <div className="flex h-[24px] w-[24px] items-center justify-center bg-[linear-gradient(115deg,#fe315d_30%,#9a4a9c_50%,#1a7bf8_60%)] [clip-path:polygon(8%_6%,42%_0,60%_14%,80%_6%,100%_36%,94%_80%,68%_100%,50%_88%,12%_100%,18%_64%,0_60%)]">
        <div className="flex h-[14px] w-[14px] flex-col bg-black pl-[2px] font-['Liberation_Mono',monospace] text-[9px] leading-[9px] font-bold text-white">IJ<div className="mt-px h-px w-[5px] bg-white" /></div>
      </div>);
    case "folder": return <Ico w={22} h={20}><path d="M0 1h9l1 3H0z" fill="#d99a0b" /><path d="M0 4h10l2-2h10v17H0z" fill="#fcd35f" /><path d="M4 18v-7h14v7h-4v-4H8v4z" fill="#3c8fd4" /></Ico>;
    case "t": return <Ico w={22} h={22}><path d="m2 1 19 2-1 18-19-1z" fill="#d6d6d6" /><path d="M1 2h19v19H1z" fill="#f4f4f4" /><path d="M6.500 8.500v-2h8v2M10.500 6.500v9M8.500 15.500h4" stroke="#555" strokeWidth="1.200" /></Ico>;
    case "wps": return <Ico w={22} h={22}><rect width="21" height="21" rx="2.500" fill="#2b87f5" /><path d="M4 7h5l3 7 4-7h2M4 7l4 7 3-6h4" stroke="#fff" strokeWidth="1.500" /><path d="M13 13h9v9h-9z" fill="#f47f55" /><path d="M15.500 21v-6h4v3h-4" stroke="#fff" strokeWidth="1.100" /></Ico>;
    case "youdao": return <div className="flex h-[24px] w-[24px] items-center justify-center rounded-[4px] bg-[#e6171b] text-[11px] leading-none font-black tracking-[-0.5px] text-white">有道</div>;
    case "monitor": return <Ico w={24} h={23}><rect x=".5" y=".5" width="23" height="17" rx="1" fill="#a79ccb" stroke="#8478ac" /><path d="M3 3h18v12H3z" fill="#8fd6ff" /><path d="M3 3h18v5H3z" fill="#bde8ff" /><path d="M9 18h7v2h4v2H4v-2h5z" fill="#8d7fb8" /></Ico>;
    case "wechat": return (
      <Ico w={24} h={20}>
        <ellipse cx="8.500" cy="7.500" rx="8.500" ry="7.200" fill="#7ed04b" /><path d="m3 12-1 4 4-2z" fill="#7ed04b" />
        <ellipse cx="16.800" cy="12.500" rx="7.200" ry="6" fill="#f3f3f3" /><path d="m20 17 2 3-4-1z" fill="#f3f3f3" />
        <circle cx="5.500" cy="5" r="1.200" fill="#2f5a1c" /><circle cx="11.500" cy="5" r="1.200" fill="#2f5a1c" /><circle cx="14.500" cy="11" r="1" fill="#666" /><circle cx="19.500" cy="11" r="1" fill="#666" />
      </Ico>);
    case "note": return <Note w={24} />;
    case "cmd": return <div className="h-[20px] w-[22px] border border-t-[3px] border-[#9a9a9a] bg-black pl-[2px] font-['Liberation_Mono',monospace] text-[6.500px] leading-[8px] font-bold text-white">C:\_</div>;
    case "gear": return (
      <Ico w={20} h={20}>
        <circle cx="10" cy="10" r="5.800" stroke="#fff" strokeWidth="2.400" />
        {[0, 45, 90, 135, 180, 225, 270, 315].map((a) => <path key={a} d="M8.200 1h3.600v3H8.200z" fill="#fff" transform={`rotate(${a} 10 10)`} />)}
      </Ico>);
    default: return (
      <Ico w={24} h={24}>
        <path d="M1 14C2 7 10 3 16 4s7 5 6 10-6 8-10 8-3-4-6-4-5-1-5-4z" fill="#b5dcf2" stroke="#7aa9c9" strokeWidth=".6" />
        <circle cx="5" cy="13" r="2.200" fill="#d94d3f" /><circle cx="8.500" cy="8.800" r="2.200" fill="#61b33f" /><circle cx="14" cy="7.500" r="2" fill="#efc43a" /><circle cx="18" cy="12" r="2" fill="#4a7fd0" />
        <circle cx="10.500" cy="14.500" r="1.700" fill="#1d2a37" />
        <path d="m21 3-8 19-1.500.5V20L18 3z" fill="#d98d3c" /><path d="m17 1 3-1 4 3-3 3-3-2z" fill="#b9875a" />
      </Ico>);
  }
}

function Win10Bar() {
  return (
    <div className="flex h-[40px] items-center bg-[#1c2b38] text-white">
      <div className="flex w-[39px] pl-[7px]">
        <Ico w={16} h={16}><path d="m0 2.300 6.500-.9v6.200H0zM7.300 1.300 16 0v7.600H7.300zM0 8.400h6.500v6.200L0 13.700zM7.300 8.400H16V16l-8.700-1.200z" fill="#fff" /></Ico>
      </div>
      <div className="mr-px flex h-[40px] w-[344px] items-center border border-[#c2c2c2] bg-[#f1f1f1] text-[14px] text-[#333]">
        <Ico w={17} h={17} c="ml-[10px]"><circle cx="10.500" cy="6" r="5.300" stroke="#222" strokeWidth="1.300" /><path d="M6.500 9.800 1 15.500" stroke="#222" strokeWidth="1.400" /></Ico>
        <span className="ml-[12px] pt-[2px]">在此键入进行搜索</span>
      </div>
      {SLOTS.map(([k, m]) => (
        <div key={k} className={"flex h-[40px] w-[49px] shrink-0 flex-col items-center " + (m === 3 ? "border-r border-[#1c2b38] bg-[#4c5864]" : "")}>
          <div className="flex h-[38px] items-center pt-[2px]"><SlotIcon k={k} /></div>
          {m === 1 && <div className="h-[2px] w-[40px] bg-[#76b9ed]" />}
          {m === 2 && <div className="flex h-[2px] w-[40px] bg-[#4f7ea5]"><div className="w-[31px] bg-[#76b9ed]" /></div>}
          {m === 3 && <div className="h-[2px] w-full bg-[#76b9ed]" />}
        </div>
      ))}
      <div className="flex-1" />
      <Ico w={12} h={7}><path d="m1 6 5-5 5 5" stroke="#fff" strokeWidth="1.400" /></Ico>
      <Ico w={17} h={13} c="ml-[10px]"><path d="M4.500 4.500h10v6h-9M15.500 6v3" stroke="#fff" /><path d="M6 6h7v3H6z" fill="#fff" /><path d="M1.500 0v2M4.500 0v2M.5 2.500h5v2l-2.500 1-2.500-1zM3 5v6h3" stroke="#fff" /></Ico>
      <Ico w={17} h={14} c="ml-[7px]"><path d="M5 2.500h11v8H4.500V6M10.500 11v2M7 13.500h7M.5.500h4v3h-4zM2.500 4v9" stroke="#fff" /></Ico>
      <Ico w={17} h={14} c="ml-[7px]"><path d="M.5 5h2.500L7 1.500v11L3 9H.5z" stroke="#fff" /><path d="M9 5q1.500 2 0 4" stroke="#fff" /><path d="M11 3q3 4 0 8M13.500 1q4.500 6 0 12" stroke="#7d868f" /></Ico>
      <span className="ml-[6px] w-[15px] text-[15px]">中</span>
      <div className="ml-[6px] flex h-[22px] w-[22px] items-center justify-center rounded-full bg-[#16202a]">
        <div className="flex h-[22px] w-[22px] shrink-0 items-center justify-center rounded-full border-[1.500px] border-transparent border-r-[#6fe08c] text-[12px] font-semibold">34</div>
      </div>
      <div className="ml-[8px] flex w-[62px] flex-col items-center pt-px text-[12.300px] leading-[19px] tracking-[-0.3px] whitespace-nowrap">
        <span>11:45:07</span><span>2020/9/30</span>
      </div>
      <Ico w={16} h={16} c="ml-[19px]"><path d="M.6.600h14.800v11H11l-3 3-3-3H.6z" stroke="#fff" strokeWidth="1.200" /></Ico>
      <div className="mr-[4px] ml-[20px] h-[40px] w-px bg-[#78828b]" />
    </div>
  );
}

export default function App() {
  return (
    <div className="h-[1080px] w-[1920px] overflow-hidden bg-white font-['Open_Sans','Noto_Sans_CJK_SC',sans-serif] text-[12px] leading-none">
      <div className="flex h-[959px] w-[1911px] flex-col">
        <div className="h-[919px] border-r-2 border-b-2 border-[#00109c] bg-black">
          <div className="h-[917px] border-r-2 border-b-2 border-[#0546f0] pt-[12px] pl-[311px]">
            <div className="relative flex h-[800px] w-[1280px] flex-col bg-white">
              <TitleBar />
              <Tabs />
              <Ribbon />
              <FormulaBar />
              <div className="flex h-[533px] bg-[#f8f8f8]">
                <div className="bg-white"><Sheet /></div>
                <div className="ml-[3px] flex w-[15px] flex-col pt-[2px]">
                  <ScrollBtn d="M0 5h7L3.500 1.500z" />
                  <div className="h-[483px] border border-t-0 border-[#ababab] bg-white" />
                  <div className="flex-1 bg-[#f0f0f0]" />
                  <ScrollBtn d="M0 2h7L3.500 5.500z" />
                </div>
              </div>
              <SheetTabs />
              <StatusBar />
              <Win7Bar />
              <div className="absolute top-0 left-[679px] h-[3px] w-[520px] border-b-2 border-black bg-white" />
              <div className="absolute top-[720px] left-[1141px] flex h-[48px] w-[48px] flex-col items-center rounded-full border-[3px] border-[#d3e8f8] bg-linear-to-b from-[#5398ea] to-[#8fd0ee] pt-[15px] text-[13px] text-[#e2f1ff]">
                42:19
                <div className="h-[10px] w-[4px] bg-[#7fc4f5]" />
              </div>
            </div>
          </div>
        </div>
        <Win10Bar />
      </div>
    </div>
  );
}
